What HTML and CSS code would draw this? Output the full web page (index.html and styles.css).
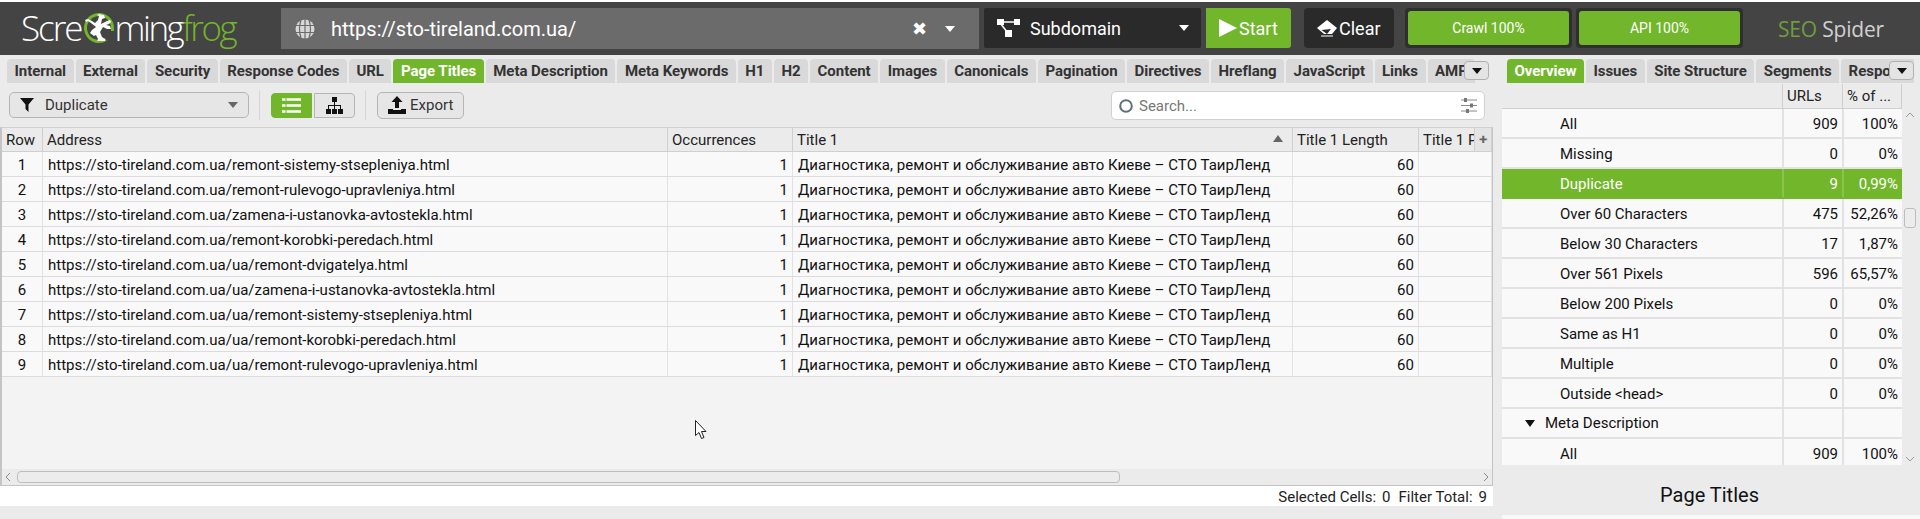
FILE: index.html
```html
<!DOCTYPE html>
<html lang="en">
<head>
<meta charset="utf-8">
<title>Screaming Frog SEO Spider</title>
<link rel="stylesheet" href="styles.css">
</head>
<body>
<div class="topstrip"></div>
<header class="bar">
  <div class="logo">
    <span>Scre</span>
    <svg class="frog" viewBox="0 0 32 32" width="32" height="32"><path class="ring" d="M23 27.500A13.500 13.500 0 1 1 29.500 16v3"/><path class="frogbody" d="M16 2l5 1 1 3-3 1-1 5 6-3 3-1 1 2-2 2-3 1 4 1 1 3h-4l-4-2-3 5 2 5 3 2v2h-8l1-2-2-4-2 1-4-3 2-3 4-3-5-4-3-2-2 1-1-2 3-1 4 2 3 2 3-3 1-4-2-1z"/></svg>
    <span class="logotail">ming</span><span class="logotail logogreen">frog</span>
  </div>
  <div class="urlbar">
    <svg class="globe" viewBox="0 0 20 20" width="20" height="20"><circle cx="10" cy="10" r="9.500" fill="#d8d8d8"/><path d="M0 6.500h20M0 13.500h20M10 0v20M6 1q-3 9 0 18M14 1q3 9 0 18" stroke="#6b6b6b" stroke-width="1.200" fill="none"/></svg>
    <span class="urltext">https://sto-tireland.com.ua/</span>
    <span class="urlx">✖</span>
    <span class="tri white"></span>
  </div>
  <div class="subdomain">
    <svg class="subicon" viewBox="0 0 23 18" width="23" height="18"><path d="M5 3h13M3 4l8 10" stroke="#fff" stroke-width="1.500" fill="none"/><rect x="0" y="0" width="7" height="6" fill="#fff"/><rect x="17" y="0" width="6" height="6" fill="#fff"/><rect x="8" y="11" width="7" height="7" fill="#fff"/></svg>
    <span class="subtext">Subdomain</span>
    <span class="tri white"></span>
  </div>
  <button class="start"><svg viewBox="0 0 18 18" width="18" height="18"><path d="M0 0l18 9L0 18z" fill="#fff"/></svg><span>Start</span></button>
  <button class="clear"><svg viewBox="0 0 20 17" width="20" height="17"><path d="M10 0l10 8-5 6H7L0 8z" fill="#fff"/><path d="M4.500 10L10 14l4-5" fill="#2a2a2a"/><path d="M4 16h12" stroke="#fff"/></svg><span>Clear</span></button>
  <div class="progress first"><div class="progin">Crawl 100%</div></div>
  <div class="progress"><div class="progin">API 100%</div></div>
  <div class="brand"><span class="brandgreen">SEO</span> Spider</div>
</header>
<main class="main">
  <section class="left">
    <nav class="tabs lefttabs">
      <span class="tab">Internal</span><span class="tab">External</span><span class="tab">Security</span><span class="tab">Response Codes</span><span class="tab">URL</span><span class="tab on">Page Titles</span><span class="tab">Meta Description</span><span class="tab">Meta Keywords</span><span class="tab">H1</span><span class="tab">H2</span><span class="tab">Content</span><span class="tab">Images</span><span class="tab">Canonicals</span><span class="tab">Pagination</span><span class="tab">Directives</span><span class="tab">Hreflang</span><span class="tab">JavaScript</span><span class="tab">Links</span><span class="tab">AMP</span>
      <button class="more"><span class="tri"></span></button>
    </nav>
    <div class="toolbar">
      <div class="combo">
        <svg viewBox="0 0 14 14" width="14" height="14"><path d="M0 0h14L8.500 6.500V14L5.500 11V6.500z" fill="#111"/></svg>
        <span class="combotext">Duplicate</span>
        <span class="tri gray"></span>
      </div>
      <i class="sep"></i>
      <button class="view on"><svg viewBox="0 0 19 15" width="19" height="15"><path d="M0 1.500h19M0 7.500h19M0 13.500h19" stroke="#fff" stroke-width="2.400"/><path d="M4 0v15" stroke="#72b62b"/></svg></button>
      <button class="view tree"><svg viewBox="0 0 17 17" width="17" height="17"><path d="M6 0h5v5H6zM0 12h5v5H0zM6 12h5v5H6zM12 12h5v5h-5zM8 5h1v3h6v4h-1V9H9v3H8V9H3v3H2V8h6z" fill="#111"/></svg></button>
      <i class="sep"></i>
      <button class="export"><svg viewBox="0 0 18 18" width="18" height="18"><path d="M9 0l5.500 6H11v6H7V6H3.500z" fill="#111"/><path d="M0 13h5v1h8v-1h5v5H0z" fill="#111"/></svg><span>Export</span></button>
      <div class="search">
        <svg viewBox="0 0 14 14" width="14" height="14"><circle cx="7" cy="7" r="5.800" fill="none" stroke="#5f6f7a" stroke-width="2"/></svg>
        <span class="searchtext">Search...</span>
        <svg class="slider" viewBox="0 0 16 15" width="16" height="15"><path d="M0 2h16M0 7.500h16M0 13h16" stroke="#888"/><path d="M3 0h3v4H3zM9 5.500h3v4H9zM5 11h3v4H5z" fill="#777"/></svg>
      </div>
    </div>
    <div class="tablewrap">
      <table class="grid">
        <colgroup><col class="c1"><col class="c2"><col class="c3"><col class="c4"><col class="c5"><col class="c6"><col class="c7"></colgroup>
        <thead><tr><th>Row</th><th>Address</th><th>Occurrences</th><th class="sorted">Title 1<i class="sortup"></i></th><th>Title 1 Length</th><th>Title 1 Pixel Width</th><th class="plus">✚</th></tr></thead>
        <tbody>
          <tr><td class="ctr">1</td><td class="url">https://sto-tireland.com.ua/remont-sistemy-stsepleniya.html</td><td class="num">1</td><td>Диагностика, ремонт и обслуживание авто Киеве – СТО ТаирЛенд</td><td class="num">60</td><td colspan="2"></td></tr>
          <tr><td class="ctr">2</td><td class="url">https://sto-tireland.com.ua/remont-rulevogo-upravleniya.html</td><td class="num">1</td><td>Диагностика, ремонт и обслуживание авто Киеве – СТО ТаирЛенд</td><td class="num">60</td><td colspan="2"></td></tr>
          <tr><td class="ctr">3</td><td class="url">https://sto-tireland.com.ua/zamena-i-ustanovka-avtostekla.html</td><td class="num">1</td><td>Диагностика, ремонт и обслуживание авто Киеве – СТО ТаирЛенд</td><td class="num">60</td><td colspan="2"></td></tr>
          <tr><td class="ctr">4</td><td class="url">https://sto-tireland.com.ua/remont-korobki-peredach.html</td><td class="num">1</td><td>Диагностика, ремонт и обслуживание авто Киеве – СТО ТаирЛенд</td><td class="num">60</td><td colspan="2"></td></tr>
          <tr><td class="ctr">5</td><td class="url">https://sto-tireland.com.ua/ua/remont-dvigatelya.html</td><td class="num">1</td><td>Диагностика, ремонт и обслуживание авто Киеве – СТО ТаирЛенд</td><td class="num">60</td><td colspan="2"></td></tr>
          <tr><td class="ctr">6</td><td class="url">https://sto-tireland.com.ua/ua/zamena-i-ustanovka-avtostekla.html</td><td class="num">1</td><td>Диагностика, ремонт и обслуживание авто Киеве – СТО ТаирЛенд</td><td class="num">60</td><td colspan="2"></td></tr>
          <tr><td class="ctr">7</td><td class="url">https://sto-tireland.com.ua/ua/remont-sistemy-stsepleniya.html</td><td class="num">1</td><td>Диагностика, ремонт и обслуживание авто Киеве – СТО ТаирЛенд</td><td class="num">60</td><td colspan="2"></td></tr>
          <tr><td class="ctr">8</td><td class="url">https://sto-tireland.com.ua/ua/remont-korobki-peredach.html</td><td class="num">1</td><td>Диагностика, ремонт и обслуживание авто Киеве – СТО ТаирЛенд</td><td class="num">60</td><td colspan="2"></td></tr>
          <tr><td class="ctr">9</td><td class="url">https://sto-tireland.com.ua/ua/remont-rulevogo-upravleniya.html</td><td class="num">1</td><td>Диагностика, ремонт и обслуживание авто Киеве – СТО ТаирЛенд</td><td class="num">60</td><td colspan="2"></td></tr>
        </tbody>
      </table>
      <svg class="cursor" viewBox="0 0 12 20" width="12" height="20"><path d="M.5.500v15l3.500-3 2.500 6 2.500-1-2.500-6h4.500z" fill="#fff" stroke="#222"/></svg>
    </div>
    <div class="hscroll">
      <svg viewBox="0 0 6 10" width="6" height="10"><path d="M5 1L1 5l4 4" fill="none" stroke="#888"/></svg>
      <div class="hthumb"></div>
      <svg class="hright" viewBox="0 0 6 10" width="6" height="10"><path d="M1 1l4 4-4 4" fill="none" stroke="#888"/></svg>
    </div>
    <div class="status"><span>Selected Cells:</span><span>0</span><span class="gapl">Filter Total:</span><span>9</span></div>
  </section>
  <aside class="right">
    <nav class="tabs righttabs">
      <span class="tab on">Overview</span><span class="tab">Issues</span><span class="tab">Site Structure</span><span class="tab">Segments</span><span class="tab">Response Codes</span>
      <button class="more"><span class="tri"></span></button>
    </nav>
    <div class="overview">
      <div class="ovtable">
        <div class="ovhead"><span class="ovname"></span><span class="ovurls">URLs</span><span class="ovpct">% of ...</span></div>
        <div class="ovrow"><span class="ovname">All</span><span class="ovv">909</span><span class="ovp">100%</span></div>
        <div class="ovrow"><span class="ovname">Missing</span><span class="ovv">0</span><span class="ovp">0%</span></div>
        <div class="ovrow sel"><span class="ovname">Duplicate</span><span class="ovv">9</span><span class="ovp">0,99%</span></div>
        <div class="ovrow"><span class="ovname">Over 60 Characters</span><span class="ovv">475</span><span class="ovp">52,26%</span></div>
        <div class="ovrow"><span class="ovname">Below 30 Characters</span><span class="ovv">17</span><span class="ovp">1,87%</span></div>
        <div class="ovrow"><span class="ovname">Over 561 Pixels</span><span class="ovv">596</span><span class="ovp">65,57%</span></div>
        <div class="ovrow"><span class="ovname">Below 200 Pixels</span><span class="ovv">0</span><span class="ovp">0%</span></div>
        <div class="ovrow"><span class="ovname">Same as H1</span><span class="ovv">0</span><span class="ovp">0%</span></div>
        <div class="ovrow"><span class="ovname">Multiple</span><span class="ovv">0</span><span class="ovp">0%</span></div>
        <div class="ovrow"><span class="ovname">Outside &lt;head&gt;</span><span class="ovv">0</span><span class="ovp">0%</span></div>
        <div class="ovrow"><span class="ovname group"><i class="tri black"></i>Meta Description</span><span class="ovv"></span><span class="ovp"></span></div>
        <div class="ovrow"><span class="ovname">All</span><span class="ovv">909</span><span class="ovp">100%</span></div>
      </div>
      <div class="vscroll">
        <svg viewBox="0 0 10 6" width="10" height="6"><path d="M1 5l4-4 4 4" fill="none" stroke="#999"/></svg>
        <div class="vthumb"></div>
        <svg class="vdown" viewBox="0 0 10 6" width="10" height="6"><path d="M1 1l4 4 4-4" fill="none" stroke="#999"/></svg>
      </div>
    </div>
    <div class="pagetitle">Page Titles</div>
    <div class="bottomstrip"></div>
  </aside>
</main>
</body>
</html>
```

FILE: styles.css
```css
* { box-sizing: border-box; }
html, body { margin: 0; padding: 0; }
body { width: 1920px; height: 519px; overflow: hidden; background: #ebebeb; font-family: Roboto, "Noto Sans", sans-serif; font-size: 15px; color: #111; }
button { font-family: inherit; margin: 0; padding: 0; }
.topstrip { height: 2px; background: #fff; }

.bar { height: 53px; background: #444; display: flex; align-items: flex-start; padding-top: 6px; }
.logo { width: 259px; margin-left: 21px; margin-right: 1px; margin-top: 3px; height: 34px; display: flex; align-items: center; font-family: "Open Sans", sans-serif; font-weight: 300; font-size: 35px; letter-spacing: -2px; color: #fff; line-height: 34px; flex: none; }
.logotail { letter-spacing: -2.500px; }
.logogreen { color: #72b62b; }
.frog { flex: none; margin: 0 0 0 1px; }
.ring { fill: none; stroke: #72b62b; stroke-width: 3; }
.frogbody { fill: #fff; }
.urlbar { width: 698px; height: 41px; background: #6b6b6b; display: flex; align-items: center; padding-left: 14px; color: #fff; flex: none; }
.globe { flex: none; }
.urltext { font-size: 20px; margin-left: 16px; width: 581px; }
.urlx { font-size: 18px; width: 33px; }
.tri { display: inline-block; width: 0; height: 0; border-left: 5px solid transparent; border-right: 5px solid transparent; border-top: 6px solid #111; flex: none; }
.tri.white { border-top-color: #fff; }
.tri.gray { border-top-color: #666; }
.tri.black { border-top-color: #111; margin-right: 10px; border-top-width: 7px; }
.subdomain { width: 217px; height: 40px; margin-left: 5px; background: #2a2a2a; border-radius: 2px; display: flex; align-items: center; padding-left: 13px; color: #fff; flex: none; }
.subicon { flex: none; }
.subtext { font-size: 18px; margin-left: 10px; width: 149px; }
.start { width: 85px; height: 40px; margin-left: 5px; background: #72b62b; border: 0; border-radius: 0 3px 3px 0; display: flex; align-items: center; padding-left: 13px; gap: 2px; color: #fff; font-size: 18px; flex: none; }
.clear { width: 90px; height: 40px; margin-left: 13px; background: #2a2a2a; border: 0; border-radius: 4px; display: flex; align-items: center; padding-left: 13px; gap: 2px; color: #fff; font-size: 18px; flex: none; }
.progress { width: 167px; height: 40px; margin-left: 4px; padding: 3px; background: #2f2f2f; border-radius: 4px; flex: none; }
.progress.first { margin-left: 11px; }
.progin { height: 34px; background: #72b62b; border-radius: 3px; color: #fff; font-size: 14px; display: flex; align-items: center; justify-content: center; }
.brand { margin-left: 35px; margin-top: 7px; font-family: "Open Sans", sans-serif; font-size: 21px; color: #d0d0d0; letter-spacing: -.2px; flex: none; }
.brandgreen { color: #6e9e3c; }

.main { display: flex; height: 464px; padding-top: 4px; }
.left { width: 1502px; flex: none; display: flex; flex-direction: column; }
.right { flex: 1; min-width: 0; display: flex; flex-direction: column; }

.tabs { height: 24px; display: flex; gap: 2px; position: relative; overflow: hidden; flex: none; }
.lefttabs { margin-left: 7px; width: 1482px; }
.righttabs { margin-left: 5px; width: 407px; }
.tab { flex: none; height: 24px; padding: 0 7.500px; background: #d9d9d9; border-radius: 4px 4px 0 0; font-weight: 700; font-size: 15px; letter-spacing: -.04px; line-height: 25px; color: #333; white-space: nowrap; }
.tab.on { background: #72b62b; color: #fff; }
.more { position: absolute; top: 2px; width: 25px; height: 19px; background: #e4e4e4; border: 1px solid #b0b0b0; border-radius: 4px; display: flex; align-items: center; justify-content: center; }
.lefttabs .more { left: 1457px; }
.righttabs .more { left: 382px; }

.toolbar { height: 44px; display: flex; align-items: center; padding: 0 0 0 9px; margin-right: 17px; flex: none; }
.combo { width: 240px; height: 26px; background: #e6e6e6; border: 1px solid #b5b5b5; border-radius: 5px; display: flex; align-items: center; padding-left: 10px; padding-right: 10px; flex: none; }
.combotext { margin-left: 11px; flex: 1; color: #333; }
.sep { width: 1px; height: 30px; background: #d6d6d6; margin: 0 11px 0 10px; flex: none; }
.view { width: 41px; height: 25px; border: 1px solid #b5b5b5; background: #e6e6e6; border-radius: 4px 0 0 4px; display: flex; align-items: center; justify-content: center; flex: none; }
.view.on { background: #72b62b; border-color: #72b62b; }
.view.tree { margin-left: 2px; border-radius: 0 4px 4px 0; }
.export { width: 87px; height: 27px; border: 1px solid #b5b5b5; background: #e6e6e6; border-radius: 5px; display: flex; align-items: center; padding-left: 10px; gap: 4px; font-size: 15px; color: #333; flex: none; }
.search { margin-left: auto; width: 374px; height: 29px; margin-top: 1px; background: #fff; border: 1px solid #d0d0d0; border-radius: 5px; display: flex; align-items: center; padding: 0 7px; flex: none; }
.searchtext { margin-left: 6px; flex: 1; color: #777; }

.tablewrap { flex: 1; position: relative; overflow: hidden; background: #f3f3f3; width: 1493px; border-left: 2px solid #c4c4c4; border-right: 1px solid #c4c4c4; border-top: 1px solid #d0d0d0; min-height: 0; }
.grid { table-layout: fixed; border-collapse: separate; border-spacing: 0; width: 1490px; }
.c1 { width: 41px; } .c2 { width: 625px; } .c3 { width: 125px; } .c4 { width: 500px; } .c5 { width: 126px; } .c6 { width: 56px; } .c7 { width: 17px; }
th { height: 24px; background: #ebebeb; border-right: 1px solid #cfcfcf; border-bottom: 1px solid #cfcfcf; font-weight: 400; font-size: 15px; text-align: left; padding: 1px 4px 0; overflow: hidden; white-space: nowrap; color: #222; }
th.sorted { position: relative; }
.sortup { position: absolute; right: 9px; top: 7px; width: 0; height: 0; border-left: 5px solid transparent; border-right: 5px solid transparent; border-bottom: 7px solid #666; }
th.plus { padding: 0; text-align: center; font-size: 10px; color: #666; background: #e4e4e4; }
td { height: 25px; background: #f9f9f9; border-right: 1px solid #e2e2e2; border-bottom: 1px solid #dcdcdc; font-size: 15px; letter-spacing: .04px; padding: 1px 5px 0; white-space: nowrap; overflow: hidden; color: #111; }
td.url { letter-spacing: 0; }
td.num { text-align: right; padding-right: 4px; }
td.ctr { text-align: center; }
.cursor { position: absolute; left: 693px; top: 292px; }

.hscroll { height: 17px; width: 1493px; background: #ebebeb; border-bottom: 1px solid #c4c4c4; border-left: 2px solid #c4c4c4; border-right: 1px solid #c4c4c4; display: flex; align-items: center; padding-left: 3px; flex: none; }
.hthumb { width: 1103px; height: 12px; margin-left: 6px; background: #ececec; border: 1px solid #bdbdbd; border-radius: 4px; }
.hright { margin-left: auto; margin-right: 3px; }
.status { height: 20px; width: 1493px; background: #fff; display: flex; justify-content: flex-end; gap: 6px; padding-right: 6px; font-size: 15px; line-height: 22px; color: #222; flex: none; margin-bottom: 13px; }
.gapl { margin-left: 2px; }

.overview { display: flex; height: 381px; flex: none; margin-top: 1px; overflow: hidden; }
.ovtable { width: 400px; flex: none; overflow: hidden; }
.ovhead { display: flex; height: 25px; background: #ebebeb; border-bottom: 1px solid #cfcfcf; line-height: 25px; color: #222; }
.ovurls, .ovpct { padding-left: 4px; border-left: 1px solid #cfcfcf; }
.ovpct { border-right: 1px solid #cfcfcf; }
.ovname { width: 280px; flex: none; padding-left: 58px; white-space: nowrap; }
.ovurls, .ovv { width: 60px; flex: none; }
.ovpct, .ovp { width: 60px; flex: none; }
.ovrow { display: flex; height: 30px; background: #f9f9f9; border-bottom: 2px solid #e2e2e2; line-height: 31px; color: #111; }
.ovv, .ovp { text-align: right; padding-right: 4px; border-left: 2px solid #e2e2e2; }
.ovrow.sel { background: #72b62b; color: #fff; border-bottom-color: #72b62b; }
.ovrow.sel .ovv, .ovrow.sel .ovp { border-left-color: #8ac44f; }
.ovname.group { padding-left: 23px; display: flex; align-items: center; }
.vscroll { flex: 1; background: #ebebeb; display: flex; flex-direction: column; align-items: center; padding: 28px 3px 3px 0; }
.vthumb { width: 12px; height: 20px; margin-top: 90px; background: #ececec; border: 1px solid #bdbdbd; border-radius: 3px; }
.vdown { margin-top: auto; }
.pagetitle { height: 50px; line-height: 60px; text-align: center; font-size: 20px; color: #111; padding-right: 3px; background: #ebebeb; flex: none; }
.bottomstrip { height: 4px; background: #f9f9f9; flex: none; }
```
